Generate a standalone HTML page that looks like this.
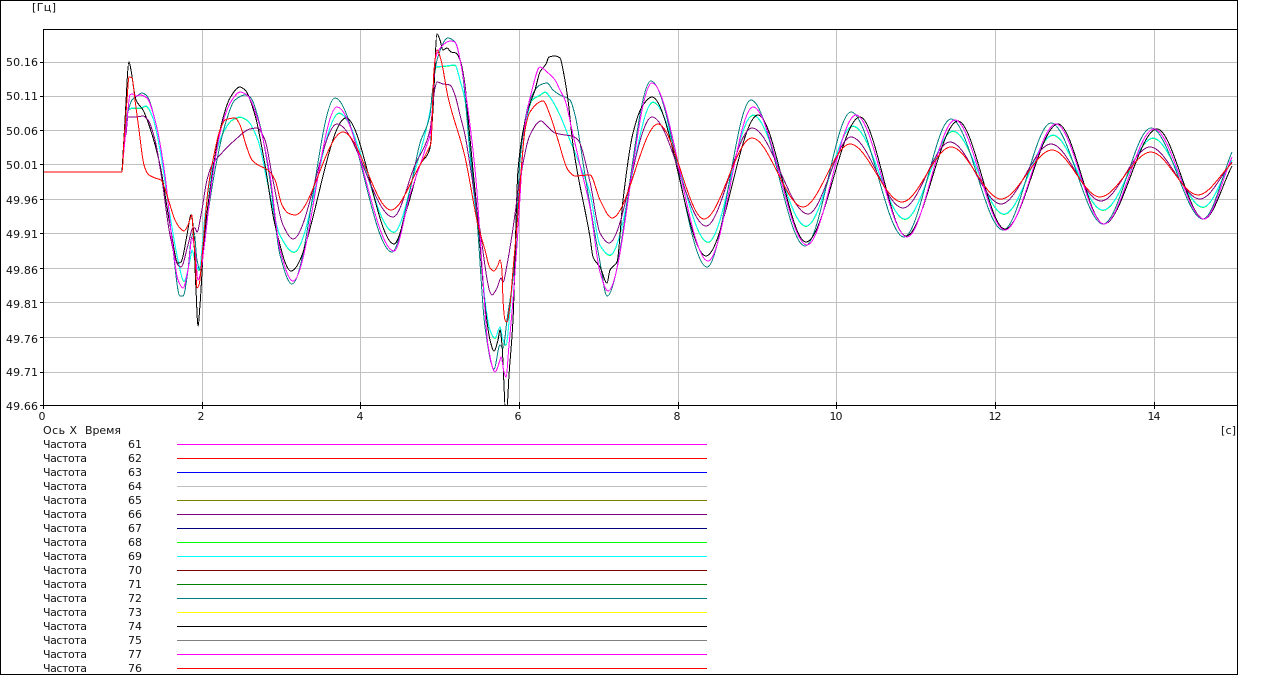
<!DOCTYPE html>
<html lang="ru">
<head>
<meta charset="utf-8">
<title>Частота</title>
<style>
html,body{margin:0;padding:0;background:#fff;overflow:hidden}
svg{display:block;position:absolute;left:0;top:0}
text{font-family:"DejaVu Sans","Liberation Sans",sans-serif;font-size:11px;fill:#111}
.h{stroke:#c0c0c0;stroke-width:1;shape-rendering:crispEdges}
.k{stroke:#000;stroke-width:1;shape-rendering:crispEdges}
.c{fill:none;stroke-width:1;shape-rendering:crispEdges;stroke-linejoin:round}
</style>
</head>
<body>
<svg id="s" width="1277" height="696" viewBox="0 0 1277 696" xmlns="http://www.w3.org/2000/svg">
<defs><clipPath id="plot"><rect x="44" y="30" width="1193" height="375"/></clipPath></defs>
<rect width="1277" height="696" fill="#fff"/>
<g class="h">
<path d="M43 62.5H1237M43 96.5H1237M43 130.5H1237M43 164.5H1237M43 199.5H1237M43 233.5H1237M43 268.5H1237M43 302.5H1237M43 337.5H1237M43 372.5H1237" fill="none"/>
<path d="M202.5 29V405M360.5 29V405M519.5 29V405M678.5 29V405M836.5 29V405M995.5 29V405M1154.5 29V405" fill="none"/>
</g>
<g id="curves" clip-path="url(#plot)"></g>
<g class="k" fill="none">
<path d="M0.5 0V674.5H1237.5V0M0 0.5H1237M43.5 29V405.5M43 29.5H1237M43 405.5H1237"/>
<path d="M40 62.5H43M40 96.5H43M40 130.5H43M40 164.5H43M40 199.5H43M40 233.5H43M40 268.5H43M40 302.5H43M40 337.5H43M40 372.5H43M40 405.5H43"/>
<path d="M43.5 402V409M202.5 402V409M360.5 402V409M519.5 402V409M678.5 402V409M836.5 402V409M995.5 402V409M1154.5 402V409"/>
</g>
<text x="32" y="11" textLength="24">[Гц]</text>
<g text-anchor="start">
<text x="6" y="66" textLength="32">50.16</text>
<text x="6" y="100" textLength="32">50.11</text>
<text x="6" y="135" textLength="32">50.06</text>
<text x="6" y="169" textLength="32">50.01</text>
<text x="6" y="204" textLength="32">49.96</text>
<text x="6" y="238" textLength="32">49.91</text>
<text x="6" y="274" textLength="32">49.86</text>
<text x="6" y="308" textLength="32">49.81</text>
<text x="6" y="343" textLength="32">49.76</text>
<text x="6" y="376" textLength="32">49.71</text>
<text x="6" y="410" textLength="32">49.66</text>
</g>
<g text-anchor="middle">
<text x="42" y="420">0</text>
<text x="201" y="420">2</text>
<text x="360" y="420">4</text>
<text x="518" y="420">6</text>
<text x="677" y="420">8</text>
<text x="836" y="420" textLength="13">10</text>
<text x="995" y="420" textLength="13">12</text>
<text x="1154" y="420" textLength="13">14</text>
</g>
<text x="1221" y="434" textLength="15">[с]</text>
<text x="43" y="434" textLength="34">Ось X</text>
<text x="85" y="434" textLength="36">Время</text>
<g>
<text x="43" y="448" textLength="44">Частота</text><text x="128" y="448" textLength="14">61</text>
<text x="43" y="462" textLength="44">Частота</text><text x="128" y="462" textLength="14">62</text>
<text x="43" y="476" textLength="44">Частота</text><text x="128" y="476" textLength="14">63</text>
<text x="43" y="490" textLength="44">Частота</text><text x="128" y="490" textLength="14">64</text>
<text x="43" y="504" textLength="44">Частота</text><text x="128" y="504" textLength="14">65</text>
<text x="43" y="518" textLength="44">Частота</text><text x="128" y="518" textLength="14">66</text>
<text x="43" y="532" textLength="44">Частота</text><text x="128" y="532" textLength="14">67</text>
<text x="43" y="546" textLength="44">Частота</text><text x="128" y="546" textLength="14">68</text>
<text x="43" y="560" textLength="44">Частота</text><text x="128" y="560" textLength="14">69</text>
<text x="43" y="574" textLength="44">Частота</text><text x="128" y="574" textLength="14">70</text>
<text x="43" y="588" textLength="44">Частота</text><text x="128" y="588" textLength="14">71</text>
<text x="43" y="602" textLength="44">Частота</text><text x="128" y="602" textLength="14">72</text>
<text x="43" y="616" textLength="44">Частота</text><text x="128" y="616" textLength="14">73</text>
<text x="43" y="630" textLength="44">Частота</text><text x="128" y="630" textLength="14">74</text>
<text x="43" y="644" textLength="44">Частота</text><text x="128" y="644" textLength="14">75</text>
<text x="43" y="658" textLength="44">Частота</text><text x="128" y="658" textLength="14">77</text>
<text x="43" y="672" textLength="44">Частота</text><text x="128" y="672" textLength="14">76</text>
</g>
<g fill="none" stroke-width="1" shape-rendering="crispEdges">
<path d="M177 444.5H707" stroke="#ff00ff"/>
<path d="M177 458.5H707" stroke="#ff0000"/>
<path d="M177 472.5H707" stroke="#0000ff"/>
<path d="M177 486.5H707" stroke="#c0c0c0"/>
<path d="M177 500.5H707" stroke="#808000"/>
<path d="M177 514.5H707" stroke="#800080"/>
<path d="M177 528.5H707" stroke="#000080"/>
<path d="M177 542.5H707" stroke="#00ff00"/>
<path d="M177 556.5H707" stroke="#00ffff"/>
<path d="M177 570.5H707" stroke="#800000"/>
<path d="M177 584.5H707" stroke="#008000"/>
<path d="M177 598.5H707" stroke="#008080"/>
<path d="M177 612.5H707" stroke="#ffff00"/>
<path d="M177 626.5H707" stroke="#000000"/>
<path d="M177 640.5H707" stroke="#808080"/>
<path d="M177 654.5H707" stroke="#ff00ff"/>
<path d="M177 668.5H707" stroke="#ff0000"/>
</g>
</svg>
<script>
var teal=[122,172,125,130,128,112,132,100,137,96,142,93,147,96,155,120,165,175,172,240,180,296,183,296,188,270,191,240,194,232,197,260,200,270,207,220,215,170,225,125,235,100,245,95,250,97,260,125,270,180,280,255,292,284,335,98,392,252,410,190,420,143,430,115,432,95,437,60,448,38,455,42,462,70,470,150,477,220,485,327,494,369,500,345,503,348,507,320,515,260,520,160,530,100,540,85,547,83,553,90,560,95,570,100,575,115,585,175,590,205,600,262,607,296,651,81,707,267,751,100,805,246,851,112,904,237,951,119,1003,230,1051,123,1103,224,1151,128,1203,219,1232,152];
var mag=[123,160,127,120,130,95,132,94,136,96,140,95,147,98,155,120,165,175,172,240,178,280,183,288,188,270,192,238,195,250,198,280,200,275,205,240,212,180,222,125,232,100,240,92,247,95,258,120,270,175,280,250,293,281,337,107,394,251,410,195,425,150,431,130,435,60,441,47,450,41,455,42,462,70,470,125,476,180,482,265,488,345,495,372,500,360,501,357,504,372,506,377,509,345,513,300,518,230,525,125,532,90,540,67,547,72,555,80,560,90,565,100,572,130,580,165,590,207,600,272,608,291,652,83,708,261,753,107,807,245,856,115,907,237,955,120,1005,230,1056,124,1104,224,1154,129,1204,219,1232,157];
var blk=[122,172,125,120,129,62,131,70,134,90,136,100,143,110,150,128,160,165,170,225,178,263,181,262,187,235,191,215,193,225,196,290,198,326,200,305,204,240,210,190,220,130,230,98,240,87,245,90,255,115,265,165,275,225,291,271,346,118,394,244,408,205,420,165,430,148,433,110,437,34,440,40,443,50,447,48,451,52,456,53,460,60,465,85,468,117,473,170,478,220,485,305,490,340,494,351,498,340,500,330,502,345,504,385,505,406,507,406,509,375,513,320,518,170,528,110,535,90,540,72,546,64,549,57,555,56,560,58,564,75,568,100,573,145,577,170,590,237,593,257,600,267,607,283,610,270,617,262,623,200,633,133,643,105,652,97,706,256,758,115,806,242,860,117,906,236,958,121,1005,229,1058,124,1104,224,1157,129,1204,219,1232,166];
var cy=[125,135,128,110,133,108,140,108,146,106,153,118,160,150,170,215,178,260,184,281,190,260,192,250,196,265,199,270,205,215,212,170,222,135,232,120,240,117,247,120,258,140,268,185,280,235,294,252,339,113,394,232,415,170,432,100,436,67,445,66,455,65,460,80,465,100,470,155,475,205,480,243,485,300,490,330,495,338,500,327,503,340,506,345,510,310,515,250,525,130,532,100,540,95,545,92,552,100,560,115,570,140,580,165,590,193,600,245,610,255,653,102,708,242,753,115,806,226,853,126,905,219,953,131,1004,214,1053,135,1103,210,1153,138,1203,207,1232,160];
var pur=[126,135,128,117,136,117,143,116,148,120,155,140,162,180,170,235,178,265,181,267,188,245,193,228,195,228,197,232,201,215,207,180,212,165,220,155,235,140,250,129,257,128,265,140,272,175,283,225,293,239,337,124,393,217,415,165,430,130,435,88,437,82,443,84,450,85,455,95,460,115,465,135,470,165,480,230,490,292,492,295,497,288,501,278,503,282,507,265,512,235,520,180,530,135,541,121,548,127,555,133,565,135,572,136,578,140,590,182,600,233,609,243,652,117,706,226,752,128,808,214,851,137,903,208,950,142,1001,204,1051,144,1101,201,1150,147,1200,199,1232,162];
var red=[43,172,122,172,124,140,127,100,129,77,132,78,135,100,139,130,144,165,148,174,155,178,161,180,166,192,170,205,175,220,180,228,184,231,188,225,192,215,193,230,195,255,197,288,199,285,203,245,208,190,212,165,220,130,225,120,235,118,240,125,246,145,252,160,258,165,268,170,275,180,282,205,288,213,295,215,343,132,391,210,420,165,428,150,431,143,434,70,437,50,441,60,448,97,465,157,478,225,485,250,490,268,494,271,498,265,500,260,502,270,503,300,505,320,507,322,510,305,513,270,517,225,522,160,525,130,530,112,543,101,550,115,558,140,568,170,575,176,590,175,600,200,612,218,658,124,704,219,752,138,803,207,850,144,902,202,951,147,1001,199,1052,150,1100,197,1151,152,1198,195,1232,163];
function P(a,dy){
  var n=a.length/2,x=[],y=[],d=[],m=[],i;
  for(i=0;i<n;i++){x[i]=a[2*i];y[i]=a[2*i+1]+dy;}
  for(i=0;i<n-1;i++){d[i]=(y[i+1]-y[i])/(x[i+1]-x[i]);}
  m[0]=d[0];m[n-1]=d[n-2];
  for(i=1;i<n-1;i++){
    if(d[i-1]*d[i]<=0){m[i]=0;}
    else{var h0=x[i]-x[i-1],h1=x[i+1]-x[i],w1=2*h1+h0,w2=h1+2*h0;m[i]=(w1+w2)/(w1/d[i-1]+w2/d[i]);}
  }
  var s="M"+x[0]+" "+y[0];
  for(i=0;i<n-1;i++){
    var h=(x[i+1]-x[i])/3;
    s+="C"+(x[i]+h).toFixed(2)+" "+(y[i]+m[i]*h).toFixed(2)+" "+(x[i+1]-h).toFixed(2)+" "+(y[i+1]-m[i+1]*h).toFixed(2)+" "+x[i+1]+" "+y[i+1];
  }
  return s;
}
var list=[[cy,0.4,"#00ff00"],[cy,0,"#00ffff"],[teal,0,"#008080"],[blk,0,"#000000"],[pur,0,"#800080"],[mag,0,"#ff00ff"],[red,0,"#ff0000"]];
var g=document.getElementById("curves");
for(var k=0;k<list.length;k++){
  var p=document.createElementNS("http://www.w3.org/2000/svg","path");
  p.setAttribute("d",P(list[k][0],list[k][1]));
  p.setAttribute("stroke",list[k][2]);
  p.setAttribute("class","c");
  g.appendChild(p);
}
</script>
</body>
</html>
